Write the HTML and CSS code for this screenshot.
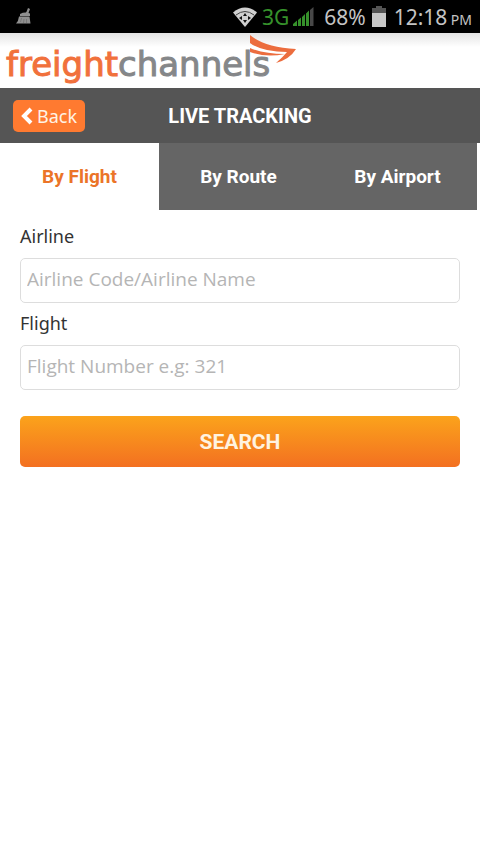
FILE: index.html
```html
<!DOCTYPE html>
<html lang="en">
<head>
<meta charset="utf-8">
<meta name="viewport" content="width=device-width, initial-scale=1">
<title>Live Tracking</title>
<link rel="stylesheet" href="styles.css">
</head>
<body>
<div class="status">
  <svg class="status-app" width="16" height="17" viewBox="0 0 16 17" aria-hidden="true">
    <path d="M10 5 L12 0 L14 1 L12.500 5 Z M4 6 Q9 3.500 14 5.500 L14 8 L4 8 Z M3 8.500 L13.500 8.500 L14.500 15.500 L0 15.500 Q2.500 13 3 8.500 Z" fill="#8f8f8f"/>
    <path d="M5.500 10 L4.500 14 M8 11 L7.500 15 M10.500 11 V15" stroke="#777" fill="none"/>
  </svg>
  <div class="status-info">
    <svg width="26" height="20" viewBox="0 0 26 20" aria-hidden="true">
      <path d="M2 5.500 Q14 -4.500 26 5.500 L14 20 Z" fill="#d0d0d0"/>
      <path d="M5 8 Q14 1 23 8" fill="none" stroke="#444" stroke-width="1"/>
      <path d="M14 6 L16 9 H12 Z M14 16 L16 13 H12 Z M8 11 L11 9 V13 Z M20 11 L17 9 V13 Z" fill="#111"/>
    </svg>
    <span class="network">3G</span>
    <svg class="signal" width="21" height="20" viewBox="0 0 21 20" aria-hidden="true">
      <path d="M0 19 V17 L4 13.500 V19 Z M5 19 V13 L8 10.500 V19 Z M9 19 V10 L12 7 V19 Z M13 19 V6.500 L16 3.500 V19 Z" fill="#36912b"/>
      <path d="M17 19 V3 L20.500 0 V19 Z" fill="#484848"/>
    </svg>
    <span class="percent">68%</span>
    <svg class="battery" width="14" height="21" viewBox="0 0 14 21" aria-hidden="true">
      <path d="M4 0 H10 V2 H14 V8 H0 V2 H4 Z" fill="#555"/>
      <path d="M0 7 H14 V21 H0 Z" fill="#c8c8c8"/>
    </svg>
    <span class="clock">12:18 <small>PM</small></span>
  </div>
</div>

<header class="brand">
  <a class="logo" href="#"><span class="logo-text"><span class="logo-accent">freight</span>channels</span><svg class="swoosh" width="46" height="30" viewBox="0 0 46 30" aria-hidden="true">
      <path d="M0 0 Q14 12 46 14 Q40 24 26 28 Q33 22 37 17 Q12 17 0 8 Z" fill="#ec6d3e"/>
      <path d="M0 13 Q14 19 35 19 Q16 23 0 17 Z" fill="#ec6d3e"/>
    </svg></a>
</header>

<div class="titlebar">
  <button class="back" type="button"><svg width="12" height="18" viewBox="0 0 12 18" aria-hidden="true"><path d="M10 2 L3 9 L10 16" fill="none" stroke="#fff" stroke-width="4"/></svg>Back</button>
  <h1>LIVE TRACKING</h1>
</div>

<nav class="tabs">
  <a class="tab active" href="#flight" aria-current="page">By Flight</a>
  <a class="tab" href="#route">By Route</a>
  <a class="tab" href="#airport">By Airport</a>
</nav>

<form class="search">
  <label for="airline">Airline</label>
  <input id="airline" type="text" placeholder="Airline Code/Airline Name">
  <label for="number">Flight</label>
  <input id="number" type="text" placeholder="Flight Number e.g: 321">
  <button class="submit" type="submit">SEARCH</button>
</form>
</body>
</html>
```
FILE: styles.css
```css
* {
  box-sizing: border-box;
}

body {
  margin: 0;
  background: #fff;
  color: #333;
  font-family: "Noto Sans", "Open Sans", sans-serif;
}

svg {
  display: block;
  flex: none;
}

.status {
  display: flex;
  justify-content: space-between;
  align-items: center;
  height: 33px;
  padding: 0 8px 0 16px;
  background: #000;
  color: #c4c4c4;
  font-size: 21px;
  line-height: 34px;
  white-space: nowrap;
}

.status-info {
  display: flex;
  align-items: center;
}

.network {
  margin: 0 4px 0 5px;
  color: #36912b;
}

.percent {
  margin: 0 6px 0 10px;
}

.clock {
  margin-left: 8px;
}

.clock small {
  margin-left: -2px;
  font-size: 14px;
  line-height: 1;
}

.brand {
  height: 55px;
  padding-left: 6px;
  background: linear-gradient(#e4e4e4, #fff 14px);
}

.logo {
  position: relative;
  display: inline-block;
  color: #858789;
  font-family: "DejaVu Sans", sans-serif;
  font-size: 34px;
  line-height: 62px;
  text-decoration: none;
  -webkit-text-stroke: 1px currentColor;
}

.logo-accent {
  color: #f1713c;
}

.swoosh {
  position: absolute;
  top: 2px;
  right: -26px;
}

.titlebar {
  display: grid;
  grid-template-columns: 1fr auto 1fr;
  align-items: center;
  height: 55px;
  padding: 0 13px;
  background: #555;
  color: #fff;
}

.titlebar h1 {
  margin: 0;
  font: bold 20px/24px Roboto, sans-serif;
}

.back {
  display: flex;
  justify-self: start;
  align-items: center;
  gap: 4px;
  height: 32px;
  padding: 0 8px;
  border: 0;
  border-radius: 5px;
  background: #ff7a30;
  color: #fff3e6;
  font: 18px/32px "Noto Sans", sans-serif;
}

.tabs {
  display: grid;
  grid-template-columns: repeat(3, 1fr);
  margin-right: 3px;
}

.tab {
  background: #656565;
  color: #fff;
  font: bold 19px/67px Roboto, sans-serif;
  text-align: center;
  text-decoration: none;
}

.tab.active {
  background: #fff;
  color: #eb7428;
}

.search {
  display: flex;
  flex-direction: column;
  padding: 12px 20px;
}

.search label {
  margin-bottom: 8px;
  font-size: 18px;
  line-height: 28px;
}

.search input {
  width: 100%;
  height: 45px;
  margin-bottom: 6px;
  padding: 0 6px 4px;
  border: 1px solid #ddd;
  border-radius: 5px;
  background: #fff;
  color: #333;
  font: 19px "Open Sans", "Noto Sans", sans-serif;
}

.search input::placeholder {
  color: #b5b5b5;
  opacity: 1;
}

.submit {
  height: 51px;
  margin-top: 20px;
  border: 0;
  border-radius: 5px;
  background: linear-gradient(#fba31b, #f37021);
  color: #fff3e0;
  font: bold 21px/51px Roboto, sans-serif;
}
```
